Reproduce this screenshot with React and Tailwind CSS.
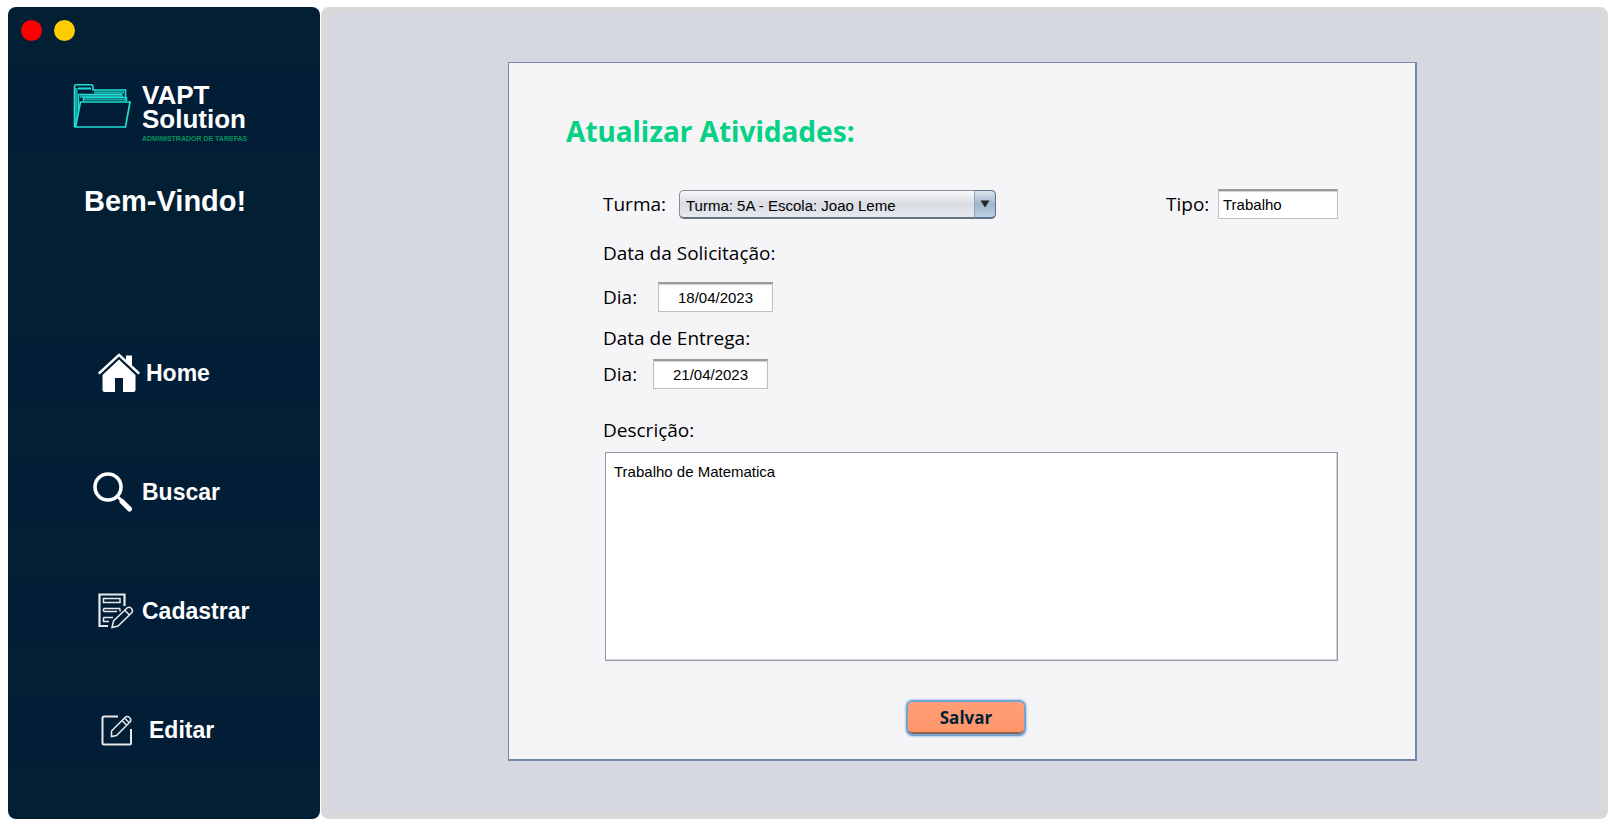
import { useId } from "react";

function FolderLogo() {
  return (
    <svg width="58" height="46" viewBox="0 0 58 46" fill="none" stroke="#1fe0d3" aria-hidden="true">
      <path d="M1.500 44V4Q1.500 1.800 3.500 1.800H18Q20 1.800 20 4V7H52.500V18" strokeWidth="1.600" />
      <path d="M3.300 5V42" strokeWidth="2.600" stroke="#17a9ab" />
      <path d="M5 5.500H18" strokeWidth="2" />
      <path d="M21 9.500H51M7 13.500H48" strokeWidth="2.400" stroke="#17a9ab" />
      <path d="M5.500 28V11.500H48.500L49.500 14M10.500 18V14.500H53.500V18" strokeWidth="1.400" />
      <path d="M11 16.500H53" strokeWidth="2" stroke="#17a9ab" />
      <path d="M7.500 19H57L52.500 44H2.500Z" strokeWidth="1.700" fill="#021d36" />
    </svg>
  );
}

function HomeIcon() {
  return (
    <svg width="42" height="40" viewBox="0 0 42 40" aria-hidden="true">
      <path d="M1.500 20L21 1.800L40.500 20" fill="none" stroke="#fff" strokeWidth="2.400" strokeLinecap="round" />
      <path d="M28 5V2.500H34V13L28 7.500Z" fill="#fff" />
      <path d="M21 6.500L37.500 22V37Q37.500 39 35.500 39H25V25H17V39H6.500Q4.500 39 4.500 37V22Z" fill="#fff" />
    </svg>
  );
}

function SearchIcon() {
  return (
    <svg width="40" height="40" viewBox="0 0 40 40" fill="none" stroke="#fff" aria-hidden="true">
      <circle cx="15" cy="15" r="13" strokeWidth="3.600" />
      <path d="M25 25L29 29" strokeWidth="3" />
      <path d="M29 29.500L36.500 37" strokeWidth="5" strokeLinecap="round" />
    </svg>
  );
}

function RegisterIcon() {
  return (
    <svg width="36" height="36" viewBox="0 0 36 36" fill="none" stroke="#e8eaea" strokeWidth="1.500" aria-hidden="true">
      <path d="M26.500 13V1.500H1.500V33H10" strokeWidth="2.200" />
      <path d="M5.500 5.500H22V9.500H5.500ZM22 15.500V18.500M5.500 15.500H22M5.500 18.500H19M5.500 15.500V18.500M5.500 24.500H15M5.500 24.500V28.500H11" />
      <path d="M14 34.500L15.500 28L29 15Q31 13.500 33.500 15.500Q35.500 18 33.500 20L20 33ZM27 17.500L31.500 22" />
    </svg>
  );
}

function EditIcon() {
  return (
    <svg width="32" height="32" viewBox="0 0 32 32" fill="none" stroke="#e8eaea" strokeWidth="1.500" aria-hidden="true">
      <path d="M17 2.500H3Q1.500 2.500 1.500 4V29Q1.500 30.500 3 30.500H28.500Q30 30.500 30 29V15" strokeWidth="2" />
      <path d="M10.500 22V17L24 3.500Q26 1.500 28.500 3.500Q31 6 29 8L15.500 21.500L10.500 22.500ZM21 6.500L26 11.500M23.500 4L28.500 9" />
    </svg>
  );
}

const navItems = [
  { label: "Home", Icon: HomeIcon, spacing: "pl-[90px] gap-[6px]" },
  { label: "Buscar", Icon: SearchIcon, spacing: "pl-[85px] gap-[9px]" },
  { label: "Cadastrar", Icon: RegisterIcon, spacing: "pl-[90px] gap-[8px]" },
  { label: "Editar", Icon: EditIcon, spacing: "pl-[93px] gap-[16px]" },
];

function Sidebar() {
  return (
    <aside className="flex w-[312px] shrink-0 flex-col rounded-lg bg-[#021f34] text-white">
      <div className="flex gap-3 px-[13px] pt-[13px]">
        <button type="button" aria-label="Fechar" className="size-[21px] rounded-full bg-[#ff0000]" />
        <button type="button" aria-label="Minimizar" className="size-[21px] rounded-full bg-[#ffcc00]" />
      </div>
      <div className="mt-7 flex h-[82px] gap-[11px] bg-[#021d36] pt-[14px] pl-[65px]">
        <FolderLogo />
        <div className="text-[26px] leading-6 font-bold">
          <p>VAPT</p>
          <p>Solution</p>
          <p className="mt-1 text-[7px] leading-[8px] font-bold text-[#07935f]">ADMINISTRADOR DE TAREFAS</p>
        </div>
      </div>
      <h2 className="mt-[30px] pl-[76px] text-[29px] leading-10 font-bold">Bem-Vindo!</h2>
      <nav className="mt-[121px] flex flex-col gap-[57px] pb-7">
        {navItems.map(({ label, Icon, spacing }) => (
          <a key={label} href="#" className={`flex h-[62px] items-center bg-[#021d36] text-[23px] font-bold ${spacing}`}>
            <Icon />
            {label}
          </a>
        ))}
      </nav>
    </aside>
  );
}

function Field({ label, value, labelClass, inputClass }) {
  const id = useId();
  return (
    <div className="flex items-center">
      <label htmlFor={id} className={labelClass}>
        {label}
      </label>
      <input
        id={id}
        defaultValue={value}
        className={`h-[30px] border border-t-2 border-[#bfbfc1] border-t-[#9b9b9d] bg-white font-['Liberation_Sans',sans-serif] text-[15px] shadow-[inset_0_1px_1px_#d0d0d2] outline-none ${inputClass}`}
      />
    </div>
  );
}

function ActivityForm() {
  return (
    <form
      onSubmit={(e) => e.preventDefault()}
      className="flex flex-1 flex-col border border-r-2 border-b-2 border-[#7387aa] bg-[#f5f5f8] pt-[46px] pr-[77px] pb-[25px] pl-[57px] font-['Open_Sans',sans-serif] text-[19px] leading-6 text-black"
    >
      <h1 className="font-['Noto_Sans',sans-serif] text-[28px] leading-[44px] font-bold text-[#06d184]">Atualizar Atividades:</h1>
      <div className="mt-9 flex flex-1 flex-col pl-[37px]">
        <div className="flex items-center justify-between">
          <div className="flex items-center">
            <label htmlFor="turma" className="w-[76px]">
              Turma:
            </label>
            <div className="relative flex">
              <select
                id="turma"
                className="h-[29px] w-[317px] appearance-none rounded-[5px] border border-b-2 border-[#888b93] border-b-[#65707e] bg-linear-to-b from-[#f8f8fa] via-[#d9dce2] to-[#e7eaf0] pt-[3px] pl-[6px] font-['Liberation_Sans',sans-serif] text-[15px] outline-none"
              >
                <option>Turma: 5A - Escola: Joao Leme</option>
              </select>
              <span className="pointer-events-none absolute inset-y-0 right-0 flex w-[22px] items-center justify-center rounded-r-[5px] border border-b-2 border-[#60758d] border-l-[#8ea5bb] bg-linear-to-b from-[#dce6ef] via-[#a1b5ca] to-[#bad0e3]">
                <svg width="10" height="8" viewBox="0 0 10 8" aria-hidden="true">
                  <path d="M0.500 0.500H9.500L5 7.500Z" fill="#202428" />
                </svg>
              </span>
            </div>
          </div>
          <Field label="Tipo:" value="Trabalho" labelClass="w-[52px]" inputClass="w-[120px] pl-1" />
        </div>
        <p className="mt-[22px]">Data da Solicitação:</p>
        <div className="mt-[17px]">
          <Field label="Dia:" value="18/04/2023" labelClass="w-[55px]" inputClass="w-[115px] text-center" />
        </div>
        <p className="mt-[14px]">Data de Entrega:</p>
        <div className="mt-[9px]">
          <Field label="Dia:" value="21/04/2023" labelClass="w-[50px]" inputClass="w-[115px] text-center" />
        </div>
        <label htmlFor="descricao" className="mt-[29px]">
          Descrição:
        </label>
        <div className="mt-[10px] flex flex-1 pl-[2px]">
          <textarea
            id="descricao"
            defaultValue="Trabalho de Matematica"
            className="min-h-[120px] w-full resize-none border border-[#969ba8] bg-white px-2 pt-[10px] font-['Liberation_Sans',sans-serif] text-[15px] leading-[18px] shadow-[inset_-1px_-1px_0_#d3d4d8] outline-none"
          />
        </div>
      </div>
      <button
        type="submit"
        className="mt-[41px] ml-[342px] h-[32px] w-[116px] rounded-[5px] border-b-2 border-[#93644f] bg-linear-to-b from-[#ff9e76] to-[#ff966b] pt-[2px] text-[17px] leading-7 font-bold text-[#021f35] shadow-[0_0_0_2px_#73a4d1,0_0_2px_3px_#b3cce5] outline-none"
      >
        Salvar
      </button>
    </form>
  );
}

export default function App() {
  return (
    <div className="flex min-h-screen gap-px bg-white pt-[7px] pr-[9px] pb-[6px] pl-2 font-['Liberation_Sans',sans-serif]">
      <Sidebar />
      <main className="flex flex-1 rounded-lg bg-[#d9d9d9] pt-[6px] pr-[9px] pb-[7px] pl-[7px]">
        <div className="flex flex-1 bg-[#d5d8e1] pt-[49px] pr-[182px] pb-[51px] pl-[180px]">
          <ActivityForm />
        </div>
      </main>
    </div>
  );
}
